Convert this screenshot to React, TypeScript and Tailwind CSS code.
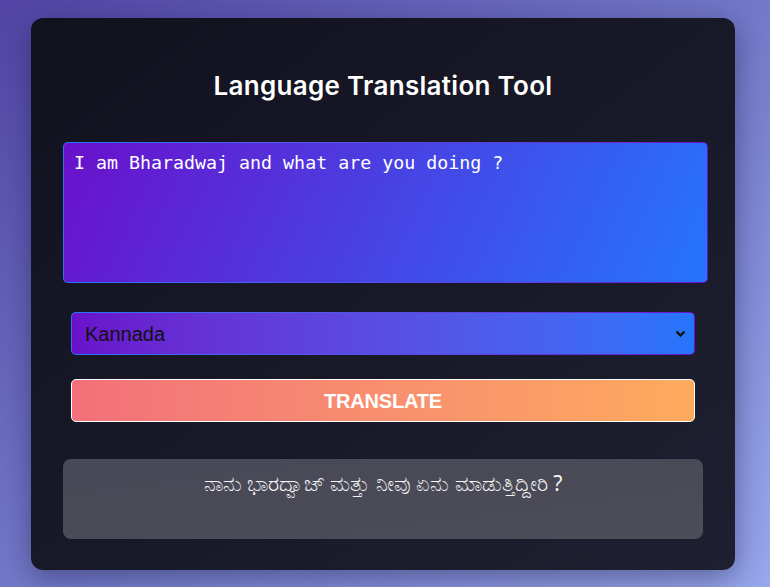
import { useState } from "react";

export default function App() {
    const [text, setText] = useState("I am Bharadwaj and what are you doing ?");
    const [lang, setLang] = useState("kn");

    return (
        <div className="min-h-screen bg-linear-to-br from-[#5344a5] via-[#7379c9] to-[#98a8ec] py-[18px] font-['Liberation_Sans',Arial,sans-serif]">
            <div className="ml-[31px] w-[704px] h-[552px] rounded-xl bg-linear-to-br from-[#12111e] to-[#1e2031] shadow-[0_8px_30px_rgba(20,20,60,0.45)] px-8 pt-[50px]">
                <h1 className="text-center text-white text-[26px] leading-9 font-semibold font-['Inter',sans-serif] tracking-[0.3px]">
                    Language Translation Tool
                </h1>

                <div className="mt-[38px] w-[645px] h-[141px] rounded-[5px] p-px bg-linear-to-r from-[#2575fc] to-[#6a11cb]">
                    <textarea
                        value={text}
                        onChange={(e) => setText(e.target.value)}
                        className="block w-full h-full resize-none rounded-[4px] bg-linear-[115deg] from-[#6a11cb] to-[#2575fc] text-white px-[10px] py-[8px] text-[18.3px] leading-6 font-['DejaVu_Sans_Mono',monospace] outline-none"
                    />
                </div>

                <div className="mt-[29px] mx-2 relative h-[43px] rounded-[5px] p-px bg-linear-to-r from-[#2575fc] to-[#6a11cb]">
                    <select
                        value={lang}
                        onChange={(e) => setLang(e.target.value)}
                        className="appearance-none block w-full h-full rounded-[4px] bg-linear-to-r from-[#6a11cb] to-[#2575fc] text-[#111] text-[20px] pl-[13px] outline-none"
                    >
                        <option value="kn">Kannada</option>
                        <option value="hi">Hindi</option>
                        <option value="ta">Tamil</option>
                        <option value="te">Telugu</option>
                    </select>
                    <svg className="absolute right-[9px] top-[18px] pointer-events-none" width="11" height="8" viewBox="0 0 11 8" fill="none">
                        <path d="M1.5 1.5 L5.5 5.5 L9.5 1.5" stroke="#111" strokeWidth="2.4" />
                    </svg>
                </div>

                <button className="mt-[24px] mx-2 w-[624px] h-[43px] rounded-[5px] border border-white bg-linear-to-r from-[#f2707a] to-[#fdab5d] text-white font-bold text-[20px] tracking-[-0.2px]">
                    TRANSLATE
                </button>

                <div className="mt-[37px] h-[80px] rounded-lg bg-linear-to-br from-[#484856] to-[#4d4d59] text-center text-[#f4f4f4] text-[21px] leading-7 pt-[10px] font-['Noto_Sans',sans-serif]">
                    ನಾನು ಭಾರದ್ವಾಜ್ ಮತ್ತು ನೀವು ಏನು ಮಾಡುತ್ತಿದ್ದೀರಿ ?
                </div>
            </div>
        </div>
    );
}
